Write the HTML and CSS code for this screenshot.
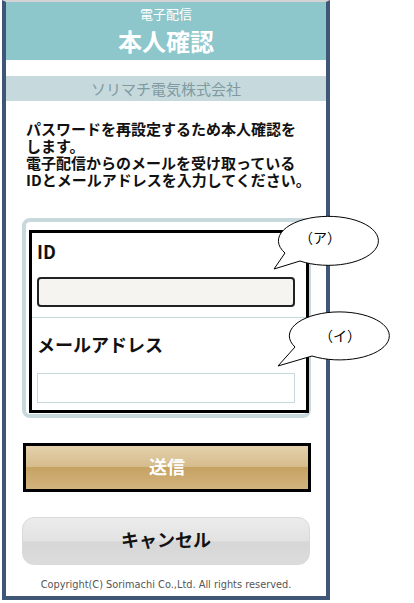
FILE: index.html
```html
<!DOCTYPE html>
<html lang="ja">
<head>
    <meta charset="UTF-8">
    <meta name="viewport" content="width=device-width, initial-scale=1.0">
    <title>本人確認</title>
    <link rel="stylesheet" href="styles.css">
</head>
<body>
    <div class="frame">
        <!-- ヘッダー -->
        <div class="header">
            <div class="header-sub">電子配信</div>
            <h1 class="header-title">本人確認</h1>
        </div>

        <div class="company">ソリマチ電気株式会社</div>

        <p class="intro">パスワードを再設定するため本人確認を<br>します。<br>電子配信からのメールを受け取っている<br>IDとメールアドレスを入力してください。</p>

        <!-- 入力フォーム -->
        <form class="panel" id="confirmForm">
            <div class="fields">
                <div class="field field-first">
                    <label for="userId">ID</label>
                    <input type="text" id="userId" class="input input-active">
                </div>
                <div class="field field-second">
                    <label for="mail">メールアドレス</label>
                    <input type="email" id="mail" class="input">
                </div>
            </div>
        </form>

        <button type="button" class="btn-send">送信</button>
        <button type="button" class="btn-cancel">キャンセル</button>

        <div class="copyright">Copyright(C) Sorimachi Co.,Ltd. All rights reserved.</div>
    </div>

    <!-- 吹き出し -->
    <svg class="callouts" width="414" height="603" viewBox="0 0 414 603">
        <path d="M285 253 L274 269 L300 261 A50 24.5 0 1 0 285 253 Z" fill="#fff" stroke="#000" stroke-width="1"/>
        <text x="320" y="243" text-anchor="middle">（ア）</text>
        <path d="M295 347 L278 366 L312 356 A50 24 0 1 0 295 347 Z" fill="#fff" stroke="#000" stroke-width="1"/>
        <text x="340" y="341" text-anchor="middle">（イ）</text>
    </svg>
</body>
</html>
```

FILE: styles.css
```css
body {
    margin: 0 0 0 2px;
    font-family: "Noto Sans CJK JP", sans-serif;
    color: #111;
    background: #fff;
}
.frame {
    width: 320px;
    border: 4px solid #3f5677;
    border-top: 2px solid #d3d3d3;
    padding-bottom: 4px;
}
.header {
    height: 58px;
    background-color: #8dc7cb;
    color: #fff;
    text-align: center;
}
.header-sub {
    font-size: 13px;
    line-height: 14px;
    padding-top: 5px;
}
.header-title {
    margin: 0;
    font-size: 24px;
    line-height: 28px;
    margin-top: 6px;
    font-weight: 700;
}
.company {
    margin-top: 16px;
    height: 25px;
    line-height: 25px;
    background-color: #c6d9dd;
    color: #7f9aa0;
    font-size: 15px;
    text-align: center;
}
.intro {
    margin: 0;
    padding: 19px 8px 0 20px;
    font-size: 15px;
    line-height: 17px;
    font-weight: 700;
    white-space: nowrap;
}
.panel {
    margin: 30px 0 0 16px;
    width: 278px;
    border: 4px solid #c8d9dd;
    border-radius: 8px;
    padding: 8px 0 1px 3px;
}
.fields {
    width: 274px;
    border: 3px solid #000;
}
.field {
    padding: 6px 11px 10px 5px;
}
.field-first {
    border-bottom: 1px solid #c8d9dd;
}
.field-second {
    padding: 14px 11px 7px 5px;
}
.field label {
    display: block;
    font-size: 18px;
    line-height: 24px;
    font-weight: 700;
}
.input {
    display: block;
    box-sizing: border-box;
    width: 258px;
    height: 30px;
    margin-top: 17px;
    border: 1px solid #c8d9dd;
    background: #fff;
}
.input-active {
    margin-top: 14px;
    border: 2px solid #222;
    border-radius: 4px;
    background: #f5f4f1;
}
.btn-send, .btn-cancel {
    display: block;
    box-sizing: border-box;
    width: 288px;
    padding-bottom: 5px;
    font-family: "Noto Sans CJK JP", sans-serif;
    font-size: 18px;
    font-weight: 700;
    cursor: pointer;
}
.btn-send {
    margin: 25px 0 0 17px;
    height: 49px;
    border: 3px solid #000;
    color: #fff;
    background: linear-gradient(#e4d1ab, #d6bc8c 48%, #c6a263 50%, #d3b37d);
}
.btn-cancel {
    margin: 25px 0 0 16px;
    height: 48px;
    border: 1px solid #d9d9d9;
    border-radius: 12px;
    color: #111;
    background: linear-gradient(#ececec, #e2e2e2 50%, #d6d6d6 52%, #dcdcdc);
}
.copyright {
    margin-top: 13px;
    font-family: "DejaVu Sans", sans-serif;
    font-size: 9.8px;
    line-height: 14px;
    color: #555;
    text-align: center;
}
.callouts {
    position: absolute;
    top: 0;
    left: 0;
    pointer-events: none;
}
.callouts text {
    font-family: "Noto Sans CJK JP", sans-serif;
    font-size: 14px;
    fill: #000;
}
```
